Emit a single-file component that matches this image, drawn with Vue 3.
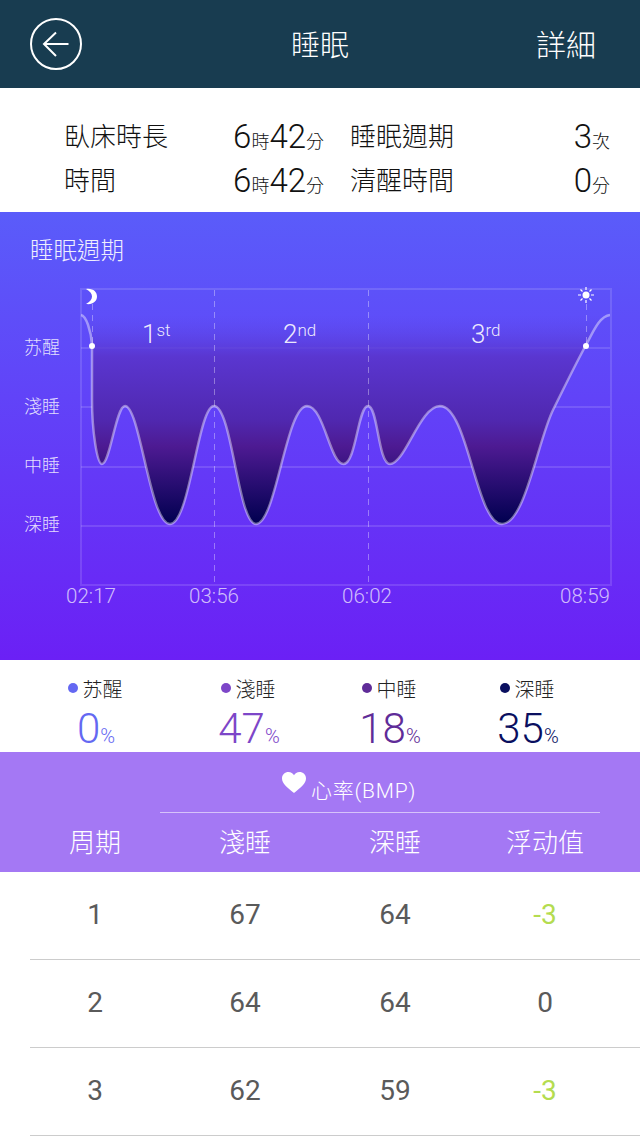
<template>
  <div class="page">
    <div class="header">
      <svg class="back" width="52" height="52" viewBox="0 0 52 52">
        <circle cx="26" cy="26" r="25" fill="none" stroke="#fff" stroke-width="2" />
        <path d="M38.500 26H14M26 14.500L14 26L26 38" fill="none" stroke="#fff" stroke-width="2" />
      </svg>
      <div class="title">睡眠</div>
      <div class="detail">詳細</div>
    </div>

    <div class="stats">
      <div class="stat" v-for="item in stats" :key="item.label">
        <span class="statLabel">{{ item.label }}</span>
        <span class="statValue">
          <template v-for="part in item.parts">
            <span class="big">{{ part[0] }}</span><span class="unit">{{ part[1] }}</span>
          </template>
        </span>
      </div>
    </div>

    <div class="chartBox">
      <div class="chartTitle">睡眠週期</div>
      <svg class="chart" width="640" height="392" viewBox="0 268 640 392">
        <defs>
          <linearGradient id="sleepFill" gradientUnits="userSpaceOnUse" x1="0" y1="315" x2="0" y2="524">
            <stop offset="0" stop-color="#5a48e8" stop-opacity="0" />
            <stop offset="0.2" stop-color="#5a36d0" />
            <stop offset="0.5" stop-color="#5028b0" />
            <stop offset="0.63" stop-color="#4d1a92" />
            <stop offset="1" stop-color="#00004f" />
          </linearGradient>
        </defs>
        <g stroke="#fff" stroke-opacity="0.13" stroke-width="2" fill="none">
          <path d="M81 289H611V585H81Z" />
          <path v-for="line in levels" :key="line.name" :d="'M81 ' + line.y + 'H610'" />
        </g>
        <path :d="curve + 'Z'" fill="url(#sleepFill)" />
        <g stroke="#fff" stroke-opacity="0.35" stroke-dasharray="6 5" fill="none">
          <path d="M92.500 304V345" />
          <path d="M214.500 290V585" />
          <path d="M368.500 290V585" />
          <path d="M586.500 304V345" />
        </g>
        <path :d="curve" fill="none" stroke="#fff" stroke-opacity="0.42" stroke-width="2.500" />
        <circle cx="92" cy="346" r="3" fill="#fff" />
        <circle cx="586" cy="346" r="3" fill="#fff" />

        <path d="M86 289C93 288 97 292 97 296.500C97 301 93 305 86 304C90 302 92 299 92 296.500C92 294 90 291 86 289Z" fill="#fff" />
        <circle cx="586" cy="295" r="3.500" fill="#fff" />
        <path d="M586 287V290M586 300V303M578 295H581M591 295H594M580.500 289.500L582.500 291.500M589.500 298.500L591.500 300.500M591.500 289.500L589.500 291.500M582.500 298.500L580.500 300.500" stroke="#fff" stroke-width="1.200" />

        <text v-for="line in levels" :key="line.name" class="axis" x="42" :y="line.labelY" text-anchor="middle">{{ line.name }}</text>
        <text v-for="c in cycles" :key="c.num" class="cycle" :x="c.x" y="343">{{ c.num }}<tspan class="sup" dy="-7">{{ c.sup }}</tspan></text>
        <text v-for="t in times" :key="t.label" class="time" :x="t.x" y="603" text-anchor="middle">{{ t.label }}</text>
      </svg>
    </div>

    <div class="legend">
      <div class="legendItem" v-for="item in legend" :key="item.name">
        <div class="legendName"><i class="dot" :style="{ background: item.color }"></i><span>{{ item.name }}</span></div>
        <div class="legendValue" :style="{ color: item.color }">{{ item.value }}<small>%</small></div>
      </div>
    </div>

    <div class="tableHead">
      <div class="heartRow">
        <svg width="24" height="21" viewBox="0 0 24 21">
          <path d="M12 21C5 15.500 0 11.500 0 6.500C0 2.500 3 0 6.500 0C9 0 11 1.300 12 3.200C13 1.300 15 0 17.500 0C21 0 24 2.500 24 6.500C24 11.500 19 15.500 12 21Z" fill="#fff" />
        </svg>
        <span>心率(BMP)</span>
      </div>
      <div class="headCols">
        <div v-for="h in heads" :key="h">{{ h }}</div>
      </div>
    </div>

    <div class="row" v-for="row in rows" :key="row[0]">
      <div v-for="(cell, i) in row" :key="i" :class="{ minus: cell < 0 }">{{ cell }}</div>
    </div>
  </div>
</template>

<script setup>
const stats = [
  { label: "臥床時長", parts: [["6", "時"], ["42", "分"]] },
  { label: "睡眠週期", parts: [["3", "次"]] },
  { label: "時間", parts: [["6", "時"], ["42", "分"]] },
  { label: "清醒時間", parts: [["0", "分"]] },
];
const levels = [
  { name: "苏醒", y: 348, labelY: 354 },
  { name: "淺睡", y: 407, labelY: 413 },
  { name: "中睡", y: 467, labelY: 472 },
  { name: "深睡", y: 526, labelY: 531 },
];
const cycles = [
  { num: "1", sup: "st", x: 142 },
  { num: "2", sup: "nd", x: 283 },
  { num: "3", sup: "rd", x: 471 },
];
const times = [
  { label: "02:17", x: 91 },
  { label: "03:56", x: 214 },
  { label: "06:02", x: 367 },
  { label: "08:59", x: 585 },
];
const legend = [
  { name: "苏醒", value: 0, color: "#6468f2" },
  { name: "淺睡", value: 47, color: "#7d46c8" },
  { name: "中睡", value: 18, color: "#5f2c98" },
  { name: "深睡", value: 35, color: "#0a0f5f" },
];
const heads = ["周期", "淺睡", "深睡", "浮动值"];
const rows = [
  [1, 67, 64, -3],
  [2, 64, 64, 0],
  [3, 62, 59, -3],
];
const curve =
  "M81 315C86 316 91 330 92 345L92 400C92 430 97 464 102 464C110 464 116 406 125 406" +
  "C140 406 150 524 170 524C190 524 198 406 214 406C232 406 238 524 256 524C276 524 286 406 307 406" +
  "C324 406 330 464 343.500 464C356 464 358 406 368 406C378 406 378 464 390 464C405 464 420 406 440 406" +
  "C468 406 476 524 502 524C525 524 538 440 553 410C565 386 575 365 586 345C594 330 600 316 610 315";
</script>

<style>
body {
  margin: 0;
  background: #fff;
}
</style>

<style scoped>
.page {
  width: 640px;
  font-family: Roboto, "Noto Sans CJK TC", sans-serif;
  font-weight: 300;
  color: #111;
}
.header {
  height: 88px;
  background: #183c50;
  color: #fff;
  display: grid;
  grid-template-columns: 1fr auto 1fr;
  align-items: center;
  padding: 0 44px;
}
.back {
  display: block;
  margin-left: -14px;
}
.title {
  font-size: 29px;
  margin-top: -3px;
}
.detail {
  font-size: 30px;
  text-align: right;
  margin-top: -2px;
}
.stats {
  display: grid;
  grid-template-columns: 260px 260px;
  column-gap: 26px;
  padding: 26px 30px 10px 64px;
}
.stat {
  height: 44px;
  display: flex;
  align-items: center;
  justify-content: space-between;
}
.statLabel {
  font-size: 26px;
  margin-top: -4px;
}
.statValue {
  display: flex;
  align-items: baseline;
}
.big {
  font-size: 33px;
}
.unit {
  font-size: 18px;
}
.chartBox {
  height: 448px;
  background: linear-gradient(180deg, #5a5cfa, #6b20f5);
}
.chartTitle {
  height: 35px;
  line-height: 36px;
  padding: 21px 0 0 30px;
  font-size: 23.500px;
  color: #fff;
  opacity: 0.9;
}
.chart {
  display: block;
}
.axis {
  font-size: 18px;
  fill: #fff;
  fill-opacity: 0.85;
}
.cycle {
  font-size: 26px;
  fill: #fff;
  fill-opacity: 0.9;
}
.sup {
  font-size: 17px;
}
.time {
  font-size: 20.500px;
  fill: #fff;
  fill-opacity: 0.7;
}
.legend {
  height: 92px;
  box-sizing: border-box;
  padding: 15px 0 0 20px;
  display: grid;
  grid-template-columns: 152px 154px 128px 148px;
}
.legendItem {
  text-align: center;
}
.legendName {
  display: flex;
  justify-content: center;
  align-items: center;
  gap: 5px;
  height: 26px;
  padding-right: 2px;
  font-size: 20px;
  color: #222;
}
.dot {
  width: 10px;
  height: 10px;
  border-radius: 50%;
}
.legendValue {
  font-size: 42px;
  line-height: 44px;
  margin-top: 6px;
}
.legendValue small {
  font-size: 20px;
}
.tableHead {
  height: 120px;
  background: #a478f4;
  color: #fff;
}
.heartRow {
  height: 61px;
  box-sizing: border-box;
  display: flex;
  justify-content: center;
  align-items: center;
  gap: 5px;
  padding-right: 62px;
  font-size: 21px;
  letter-spacing: 0.8px;
  border-bottom: 1px solid rgba(255, 255, 255, 0.55);
  margin: 0 40px 0 160px;
}
.heartRow span {
  margin-top: 14px;
}
.headCols {
  display: grid;
  grid-template-columns: repeat(4, 150px);
  padding: 0 0 0 20px;
  height: 59px;
  line-height: 60px;
  font-size: 26px;
  text-align: center;
}
.row {
  display: grid;
  grid-template-columns: 130px 170px 130px 170px;
  margin-left: 30px;
  height: 88px;
  box-sizing: border-box;
  border-bottom: 1px solid #ccc;
  line-height: 86px;
  font-weight: 400;
  font-size: 28px;
  text-align: center;
  color: #5a5a5a;
}
.minus {
  color: #b4dc50;
}
</style>
